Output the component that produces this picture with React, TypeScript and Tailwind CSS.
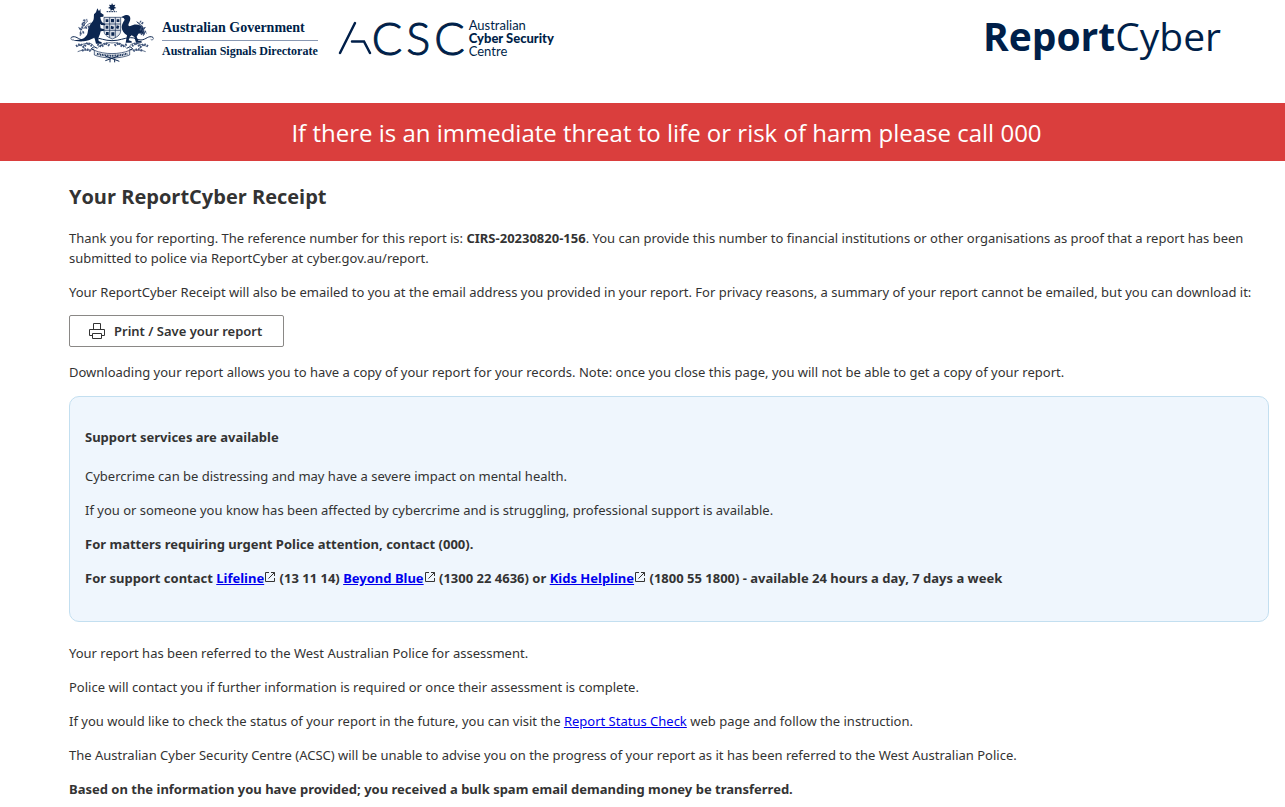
import type { ReactNode } from "react";

function Crest() {
  return (
    <svg viewBox="30 6 264 186" className="h-[62px] w-[88px] shrink-0" role="img" aria-label="Commonwealth Coat of Arms" fill="none" stroke="#0c2650">
      {/* Star and wreath */}
      <path fill="#0c2650" stroke="none" d="M156 9l3 6 7-1-3 6 6 4-7 2 1 7-6-4-5 4-1-7-7-2 6-4-3-6 7 1z" />
      <path strokeWidth="3" strokeDasharray="5 2" d="M140 35h30" />

      {/* Shield */}
      <path fill="#dde1e9" strokeWidth="2" d="M132 52h50v40c0 14-13 20-25 25-12-5-25-11-25-25z" />
      <path strokeWidth="2" d="M133 72h49M133 91h49M149 52v61M166 52v61" />
      <path fill="#0c2650" stroke="none" d="M137 58h8v8h-8zM153 57h9v10h-9zM170 58h8v8h-8zM137 77h8v9h-8zM153 77l9 3-2 8-8-2zM170 76l8 2-3 9-7-2zM138 96h8v9h-8zM154 97h9v10h-9z" />

      {/* Kangaroo */}
      <path fill="#0c2650" stroke="none" d="M112 25l5 9 4-8 1 12 9 6-1 6-9 1 1 7 4 9 10 5-1 4-11-1-4-3 2 13 11 3v4l-11 2-2 8-5 12 1 9 9 4v4h-17l-5-19c-9 6-19 11-32 12-15 1-26-1-34-4 22 1 35-3 42-13 5-6 4-13 6-21 3-10 9-17 14-23 4-6 2-14 3-20l6-6z" />

      {/* Emu */}
      <path fill="#0c2650" stroke="none" d="M182 52l13-6c9-3 16 1 16 10 0 8-6 13-6 19 0 3 3 4 6 3 9-5 21-7 31-1 10 6 13 16 11 28-5-4-11-5-18-4l-5 9 5 12 10 2v4h-17l-5-17-8-5-6 5-3 10 9 3v4h-18l4-22c-9-6-16-14-16-25 0-9 6-16 9-22l-3-5z" />

      {/* Scroll work under the supporters */}
      <path strokeWidth="3" d="M34 112c14-7 20 7 36 8 14 0 18-8 32-7 20 1 31 9 54 9s35-8 55-9c14-1 18 7 32 7 16-1 22-15 36-8" />
      <path strokeWidth="2" d="M34 112c-4 6 3 10 7 6M279 112c4 6-3 10-7 6" />

      {/* Motto ribbon */}
      <path fill="#edf0f4" strokeWidth="2" d="M103 151c30 13 76 13 106 0v14c-30 12-76 12-106 0z" />
      <path strokeWidth="6" strokeDasharray="3 2" d="M111 161c27 8 64 8 91 0" />
      <path strokeWidth="3" d="M103 151l-9-5 8-6 10 5M209 151l9-5-8-6-10 5M136 182l40-14M178 184l-42-16M150 176v11M164 176v11" />

      {/* Wattle branches */}
      <g strokeWidth="2">
        <path d="M61 108c-2-13 4-28 22-45M93 69c-10 3-16 9-22 18M55 82l12 8M250 108c2-12-4-28-20-44M231 67c10 3 14 9 18 18M257 82l-10 8" />
        <path d="M101 137c-13-14-29-5-48 1M103 147c-16 7-29-1-50 8M209 137c14-14 29-5 48 1M207 147c16 7 29-1 50 8M113 143c12-12 30-17 43-14 13-3 31 2 43 14" />
      </g>
      <g strokeWidth="7" strokeDasharray="5 3" stroke="#3f547a">
        <path d="M58 88l12-8 2-18 10-2M60 101l15-6M65 72l10 2M76 84l12-4M249 71l-9-7M254 86l-12-8M240 87l17 9M242 102l17-4" />
        <path d="M48 139l12-7 11 9 12-12 13 9M66 152l12-5 14 6M264 139l-12-7-11 9-12-12-13 9M246 152l-12-5-14 6M112 133l13 7 11-11 13 8M200 133l-13 7-11-11-13 8" />
      </g>
    </svg>
  );
}

function PrinterIcon() {
  return (
    <svg viewBox="0 0 18 18" className="size-[18px]" fill="none" stroke="currentColor" aria-hidden="true">
      <path d="M5.500 7.500v-6h7v6M4.500 13.500h-3v-6h15v6h-3M4.500 11.500h9v5h-9z" />
    </svg>
  );
}

function ExternalIcon() {
  return (
    <svg viewBox="0 0 12 12" className="inline size-3 align-baseline" fill="none" stroke="#333" aria-hidden="true">
      <path d="M5 1.500H1.500v9h9V7M7 1.500h3.500V5M10.500 1.500L4.500 7.500" />
    </svg>
  );
}

function SupportLink({ href, children }: { href: string; children: ReactNode }) {
  return (
    <>
      <a href={href} className="text-[#0000ee] underline">{children}</a>
      <ExternalIcon />
    </>
  );
}

export default function App() {
  return (
    <div className="bg-white font-['Noto_Sans','Open_Sans',sans-serif] text-[13px] leading-5 text-[#333]">
      <header className="flex h-[103px] items-start justify-between pr-16 pl-[70px] text-[#001f49]">
        <div className="flex items-start">
          <div className="flex pt-0.5">
            <Crest />
            <div className="ml-1 pt-4 font-['Liberation_Serif',serif] font-bold whitespace-nowrap">
              <div className="border-b border-[#8a99b3] pb-0.5 text-[14px] leading-5">Australian Government</div>
              <div className="text-[12px] leading-5">Australian Signals Directorate</div>
            </div>
          </div>
          <div className="ml-5 flex items-center pt-3.5 font-[Lato,sans-serif]">
            <svg viewBox="0 0 34 34" className="size-[34px]" fill="none" stroke="#001f49" strokeWidth="2.500" strokeLinecap="round" aria-label="A">
              <path d="M17 2L2 32M14 20.500h12l6 11.500" />
            </svg>
            <div className="flex gap-1 text-[45px] leading-[48px] font-light [-webkit-text-stroke:1px_#001f49]">
              <span>C</span>
              <span>S</span>
              <span>C</span>
            </div>
            <div className="ml-1 text-[13px] leading-[13px] whitespace-nowrap">
              Australian<br />
              <strong className="font-black">Cyber Security</strong><br />
              Centre
            </div>
          </div>
        </div>
        <div className="pt-2 font-['Open_Sans',sans-serif] text-[39px] leading-[56px]">
          <strong className="font-bold">Report</strong>Cyber
        </div>
      </header>

      <div className="bg-[#da3e3d] pt-3.5 pr-5 pb-3 pl-[68px] text-center font-['Open_Sans',sans-serif] text-[24px] leading-8 text-white">
        If there is an immediate threat to life or risk of harm please call 000
      </div>

      <main className="flex flex-col gap-3.5 pt-[22px] pr-4 pb-2 pl-[69px]">
        <h1 className="mb-[3px] font-['Open_Sans',sans-serif] text-[20px] leading-7 font-bold">Your ReportCyber Receipt</h1>
        <p>
          Thank you for reporting. The reference number for this report is: <strong>CIRS-20230820-156</strong>. You can
          provide this number to financial institutions or other organisations as proof that a report has been
          submitted to police via ReportCyber at cyber.gov.au/report.
        </p>
        <p>
          Your ReportCyber Receipt will also be emailed to you at the email address you provided in your report. For
          privacy reasons, a summary of your report cannot be emailed, but you can download it:
        </p>
        <button
          type="button"
          className="-mt-px mb-px flex h-8 w-[215px] items-center gap-2 rounded-xs border border-[#8a8886] bg-white pl-[18px] font-semibold"
        >
          <PrinterIcon />
          Print / Save your report
        </button>
        <p>
          Downloading your report allows you to have a copy of your report for your records. Note: once you close this
          page, you will not be able to get a copy of your report.
        </p>

        <section className="mb-[7px] flex flex-col gap-3.5 rounded-[10px] border border-[#c3dff0] bg-[#eff6fd] px-[15px] pt-[30px] pb-[33px]">
          <h2 className="mb-[5px] font-bold">Support services are available</h2>
          <p>Cybercrime can be distressing and may have a severe impact on mental health.</p>
          <p>If you or someone you know has been affected by cybercrime and is struggling, professional support is available.</p>
          <p className="font-bold">For matters requiring urgent Police attention, contact (000).</p>
          <p className="font-bold">
            For support contact <SupportLink href="#lifeline">Lifeline</SupportLink> (13 11 14){" "}
            <SupportLink href="#beyond-blue">Beyond Blue</SupportLink> (1300 22 4636) or{" "}
            <SupportLink href="#kids-helpline">Kids Helpline</SupportLink> (1800 55 1800) - available 24 hours a day, 7
            days a week
          </p>
        </section>

        <p>Your report has been referred to the West Australian Police for assessment.</p>
        <p>Police will contact you if further information is required or once their assessment is complete.</p>
        <p>
          If you would like to check the status of your report in the future, you can visit the{" "}
          <a href="#status" className="text-[#0000ee] underline">Report Status Check</a> web page and follow the
          instruction.
        </p>
        <p>
          The Australian Cyber Security Centre (ACSC) will be unable to advise you on the progress of your report as it
          has been referred to the West Australian Police.
        </p>
        <p className="font-bold">
          Based on the information you have provided; you received a bulk spam email demanding money be transferred.
        </p>
      </main>
    </div>
  );
}
